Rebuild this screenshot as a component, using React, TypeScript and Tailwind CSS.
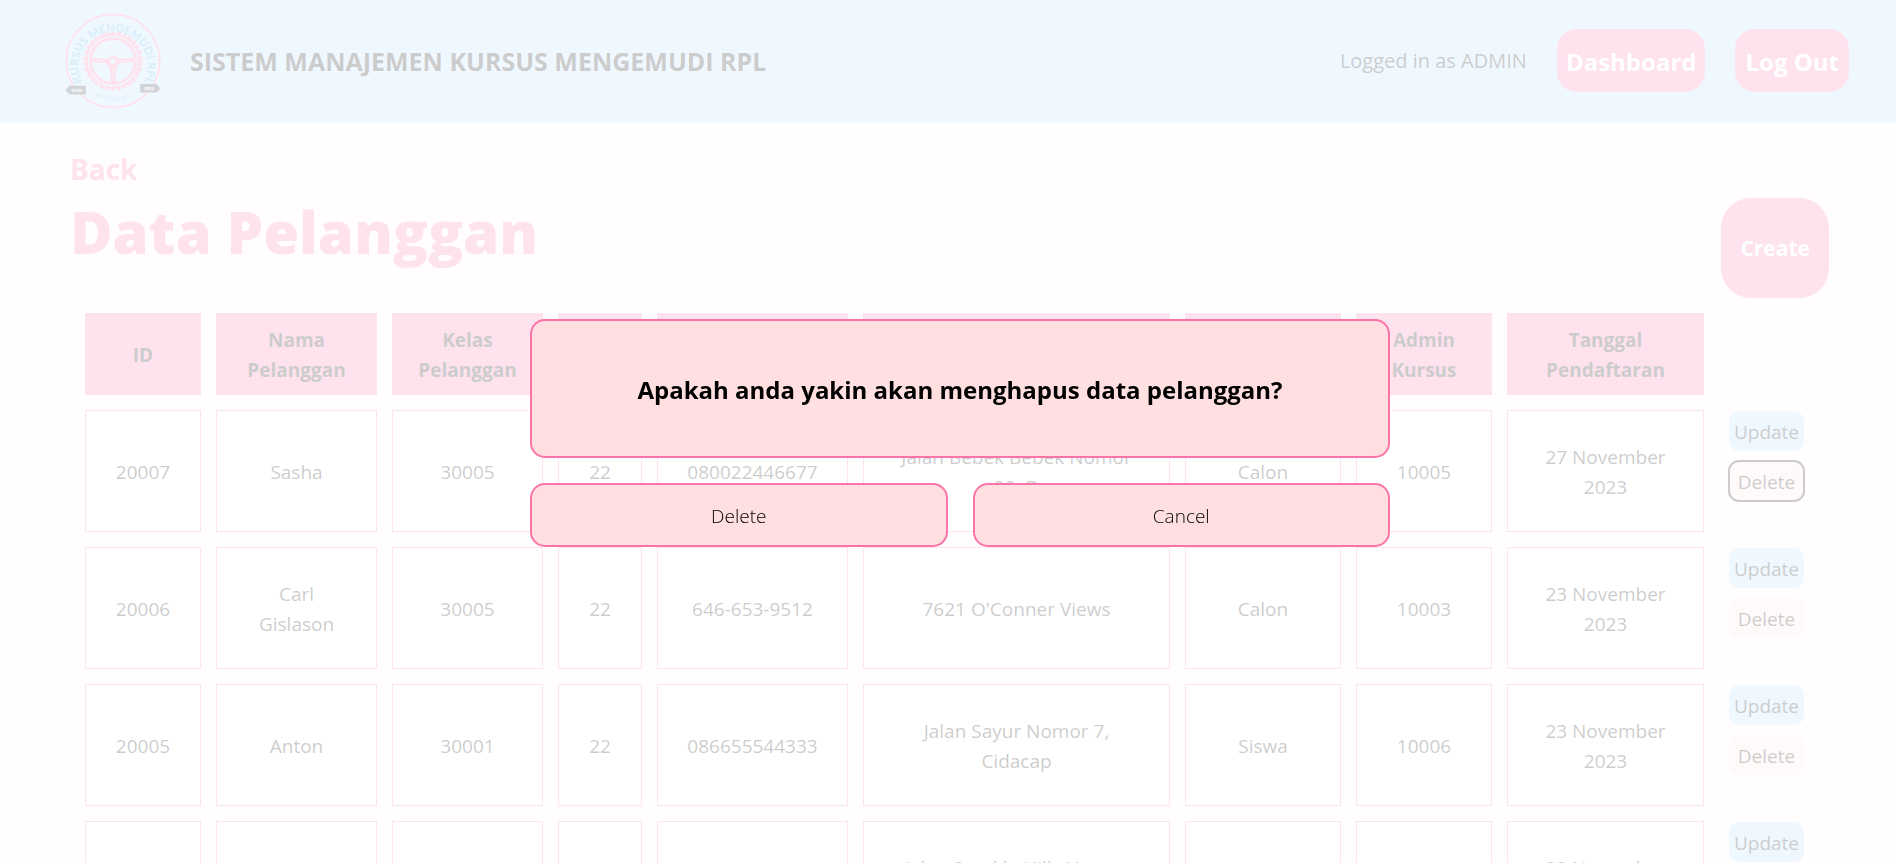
import React from "react";

type Customer = {
  id: string;
  name: string;
  kelas: string;
  age: string;
  phone: string;
  address: string;
  status: string;
  admin: string;
  date: string;
};

const columns: { label: string; width: string }[] = [
  { label: "ID", width: "w-[116px]" },
  { label: "Nama Pelanggan", width: "w-[161px]" },
  { label: "Kelas Pelanggan", width: "w-[151px]" },
  { label: "Usia", width: "w-[84px]" },
  { label: "Nomor Telepon", width: "w-[191px]" },
  { label: "Alamat", width: "w-[307px]" },
  { label: "Status", width: "w-[156px]" },
  { label: "Admin Kursus", width: "w-[136px]" },
  { label: "Tanggal Pendaftaran", width: "w-[197px]" },
];

const customers: Customer[] = [
  { id: "20007", name: "Sasha", kelas: "30005", age: "22", phone: "080022446677", address: "Jalan Bebek Bebek Nomor 90, D", status: "Calon", admin: "10005", date: "27 November 2023" },
  { id: "20006", name: "Carl Gislason", kelas: "30005", age: "22", phone: "646-653-9512", address: "7621 O'Conner Views", status: "Calon", admin: "10003", date: "23 November 2023" },
  { id: "20005", name: "Anton", kelas: "30001", age: "22", phone: "086655544333", address: "Jalan Sayur Nomor 7, Cidacap", status: "Siswa", admin: "10006", date: "23 November 2023" },
  { id: "20004", name: "Budi", kelas: "30002", age: "21", phone: "081234567890", address: "Jalan Sparkle Hills Nomor Dua, Bandung", status: "Siswa", admin: "10002", date: "23 November 2023" },
];

function Logo() {
  const teeth = Array.from({ length: 30 }, (_, i) => i * 12);
  return (
    <svg viewBox="0 0 100 100" className="size-[100px] shrink-0" role="img" aria-label="Kursus Mengemudi RPL">
      <defs>
        <path id="arc-top" d="M 19.4 71.4 A 34.6 34.6 0 1 1 80.6 71.4" />
        <path id="arc-bottom" d="M 22 78 A 39.6 39.6 0 0 0 78 78" />
      </defs>
      <circle cx="50" cy="50" r="46.6" fill="none" stroke="#fb70a6" strokeWidth="1.8" />
      <text fontFamily="Lato, sans-serif" fontWeight="900" fontSize="11.2" fill="#38aedb">
        <textPath href="#arc-top" startOffset="50%" textAnchor="middle">KURSUS MENGEMUDI RPL</textPath>
      </text>
      <text fontFamily="Lato, sans-serif" fontWeight="700" fontSize="5" letterSpacing="1.8" fill="#4db4de">
        <textPath href="#arc-bottom" startOffset="50%" textAnchor="middle">BY HELMI</textPath>
      </text>
      <g fill="#fb70a6">
        {teeth.map((a) => (
          <path key={a} d="M 47.6 24 L 48.5 20.2 L 51.5 20.2 L 52.4 24 Z" transform={`rotate(${a} 50 50)`} />
        ))}
      </g>
      <circle cx="50" cy="50" r="26.4" fill="none" stroke="#fb70a6" strokeWidth="2.2" />
      <circle cx="50" cy="50" r="22.6" fill="none" stroke="#fb70a6" strokeWidth="3" />
      <path
        fill="#fb70a6"
        fillRule="evenodd"
        d="M 28 46.5 L 44 48 Q 47 45 50 45 Q 53 45 56 48 L 72 46.5 L 72 51.5 L 58 52 Q 53 54 52.5 62 L 52.5 72 L 47.5 72 L 47.5 62 Q 47 54 42 52 L 28 51.5 Z M 50 47.4 A 2.6 2.6 0 1 0 50 52.6 A 2.6 2.6 0 1 0 50 47.4 Z"
      />
      <g fill="#b0daff">
        <circle cx="34" cy="49.3" r="0.8" />
        <circle cx="37.5" cy="49.5" r="0.8" />
        <circle cx="41" cy="49.8" r="0.8" />
        <circle cx="59" cy="49.8" r="0.8" />
        <circle cx="62.5" cy="49.5" r="0.8" />
        <circle cx="66" cy="49.3" r="0.8" />
        <circle cx="50" cy="57" r="0.8" />
        <circle cx="50" cy="60.5" r="0.8" />
        <circle cx="50" cy="64" r="0.8" />
      </g>
      <path d="M 2.5 79 L 6.5 74.6 L 22.8 75 L 22.8 83.4 L 6.5 83.4 Z" fill="#1f2937" />
      <path d="M 97.5 77.4 L 93.5 73 L 77.2 73 L 77.2 81.6 L 93.5 81.6 Z" fill="#1f2937" />
      <g fontFamily="Lato, sans-serif" fontWeight="900" fontSize="4.4" fill="#ffffff" textAnchor="middle">
        <text x="14" y="80.7">ESTD</text>
        <text x="86" y="78.9">2023</text>
      </g>
    </svg>
  );
}

function SiteHeader() {
  return (
    <header className="flex h-[123px] items-center justify-between bg-[#b0daff] pr-[47px] pb-[2px] pl-[63px]">
      <div className="flex items-center gap-[27px]">
        <Logo />
        <span className="text-[25px] font-bold">SISTEM MANAJEMEN KURSUS MENGEMUDI RPL</span>
      </div>
      <div className="flex items-center gap-[30px]">
        <span className="text-xl">Logged in as ADMIN</span>
        <button type="button" className="rounded-[20px] bg-[#fa6fa6] px-[9px] pt-[14px] pb-3 text-2xl leading-[37px] font-bold text-white">
          Dashboard
        </button>
        <button type="button" className="rounded-[20px] bg-[#fa6fa6] px-[10px] pt-[14px] pb-3 text-2xl leading-[37px] font-bold text-white">
          Log Out
        </button>
      </div>
    </header>
  );
}

function CustomerRow({ customer, active }: { customer: Customer; active: boolean }) {
  return (
    <tr>
      {Object.values(customer).map((value, i) => (
        <td key={i} className="border border-[#fa6fa6] bg-white px-[25px] pt-[31px] pb-[29px]">
          {value}
        </td>
      ))}
      <td className="px-[10px] pt-px align-top">
        <div className="flex flex-col gap-[10px]">
          <button type="button" className="h-10 rounded-[10px] bg-[#b0daff] pt-px">
            Update
          </button>
          <button
            type="button"
            className={
              active
                ? "h-10 rounded-[10px] bg-[#ffdfdf] pt-px outline-2 -outline-offset-1 outline-black"
                : "h-10 rounded-[10px] bg-[#ffdfdf] pt-px"
            }
          >
            Delete
          </button>
        </div>
      </td>
    </tr>
  );
}

function ConfirmDialog() {
  return (
    <div className="fixed inset-0 flex items-center justify-center bg-white/80 pt-[3px] pl-6">
      <div role="dialog" aria-modal="true" aria-labelledby="confirm-title" className="grid w-[860px] grid-cols-2 gap-[25px]">
        <div className="col-span-2 rounded-[15px] border-2 border-[#fa74aa] bg-[#ffdfdf] px-6 pt-[50px] pb-12 text-center">
          <h2 id="confirm-title" className="text-2xl leading-[37px] font-bold">
            Apakah anda yakin akan menghapus data pelanggan?
          </h2>
        </div>
        <button type="button" className="rounded-[15px] border-2 border-[#fa74aa] bg-[#ffdfdf] pt-4 pb-[14px] font-light">
          Delete
        </button>
        <button type="button" className="rounded-[15px] border-2 border-[#fa74aa] bg-[#ffdfdf] pt-4 pb-[14px] font-light">
          Cancel
        </button>
      </div>
    </div>
  );
}

export default function App() {
  return (
    <div className="h-screen overflow-hidden bg-[#fff5f9] font-['Open_Sans','Noto_Sans',sans-serif] text-[19px] leading-[30px] text-black">
      <SiteHeader />
      <main className="pr-[67px] pl-[70px]">
        <div className="flex items-end justify-between pt-6">
          <div className="pb-[26px] text-[#fa6fa6]">
            <a href="#" className="block text-[28px] leading-[45px] font-bold">
              Back
            </a>
            <h1 className="text-[58px] leading-[80px] font-extrabold">Data Pelanggan</h1>
          </div>
          <button type="button" className="h-[100px] rounded-[30px] bg-[#fa6fa6] px-[19px] text-[21px] font-bold text-white">
            Create
          </button>
        </div>
        <table className="w-full table-fixed border-separate border-spacing-[15px] text-center">
          <thead>
            <tr>
              {columns.map((c) => (
                <th key={c.label} scope="col" className={`${c.width} border border-[#fa6fa6] bg-[#fa6fa6] px-5 pt-[11px] pb-[9px] font-bold`}>
                  {c.label}
                </th>
              ))}
              <td className="w-[95px]" />
            </tr>
          </thead>
          <tbody>
            {customers.map((c, i) => (
              <CustomerRow key={c.id} customer={c} active={i === 0} />
            ))}
          </tbody>
        </table>
      </main>
      <ConfirmDialog />
    </div>
  );
}
